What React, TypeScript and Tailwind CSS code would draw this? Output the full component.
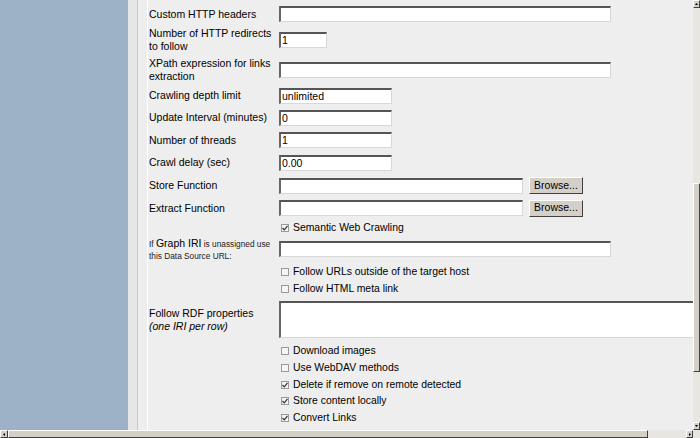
import React from "react";

const font = { fontFamily: '"Liberation Sans", Arial, sans-serif' };

function TextBox({ w, value = "", h = "h-[16px]" }: { w: string; value?: string; h?: string }) {
  return (
    <div
      className={`${w} ${h} bg-white border-t-2 border-l-2 border-b border-r border-t-[#555] border-l-[#666] border-b-[#d8d8d8] border-r-[#d8d8d8] pl-[1px] text-[10.5px] leading-[13px] text-black overflow-hidden`}
    >
      {value}
    </div>
  );
}

function Browse() {
  return (
    <div className="ml-[6px] w-[54px] h-[17px] bg-[#d4d0c8] border border-t-white border-l-white border-b-[#404040] border-r-[#404040] flex items-center justify-center text-[10.5px] text-black">
      Browse...
    </div>
  );
}

function Check({ checked, label }: { checked: boolean; label: string }) {
  return (
    <div className="flex items-center ml-[2px]">
      <span className="w-[8px] h-[8px] border border-[#9a9a9a] bg-[#f4f4f4] flex items-center justify-center">
        {checked && (
          <svg width="6" height="6" viewBox="0 0 6 6">
            <path d="M0.5 3 L2.3 4.8 L5.5 0.8" stroke="#333" strokeWidth="1.2" fill="none" />
          </svg>
        )}
      </span>
      <span className="ml-[4px] text-[10.4px] text-black">{label}</span>
    </div>
  );
}

function Row({ h, label, children }: { h: string; label?: React.ReactNode; children: React.ReactNode }) {
  return (
    <div className={`flex items-center ${h}`}>
      <div className="w-[130px] shrink-0 text-[10.5px] leading-[13px] text-black">{label}</div>
      <div className="flex items-center">{children}</div>
    </div>
  );
}

export default function App() {
  return (
    <div className="w-[700px] h-[438px] flex flex-col overflow-hidden bg-[#eeeeee]" style={font}>
      <div className="flex flex-1 min-h-0">
        {/* left nav panel */}
        <div className="w-[128px] bg-[#9db2c7]" />
        <div className="w-[9px] bg-[#e6e6e6]" />
        <div className="w-px bg-[#c8c8c8]" />
        <div className="w-[9px] bg-[#ededed]" />
        <div className="w-px bg-white" />

        {/* form */}
        <div className="flex-1 pl-[1px] pt-[2px] overflow-hidden">
          <Row h="h-[24px]" label="Custom HTTP headers">
            <TextBox w="w-[332px]" />
          </Row>
          <Row h="h-[27px]" label={<>Number of HTTP redirects<br />to follow</>}>
            <TextBox w="w-[48px]" value="1" />
          </Row>
          <Row h="h-[33px]" label={<>XPath expression for links<br />extraction</>}>
            <TextBox w="w-[332px]" />
          </Row>
          <Row h="h-[19px]" label="Crawling depth limit">
            <TextBox w="w-[113px]" value="unlimited" />
          </Row>
          <Row h="h-[25px]" label="Update Interval (minutes)">
            <TextBox w="w-[113px]" value="0" />
          </Row>
          <Row h="h-[20px]" label="Number of threads">
            <TextBox w="w-[113px]" value="1" />
          </Row>
          <Row h="h-[25px]" label="Crawl delay (sec)">
            <TextBox w="w-[113px]" value="0.00" />
          </Row>
          <Row h="h-[21px]" label="Store Function">
            <TextBox w="w-[244px]" />
            <Browse />
          </Row>
          <Row h="h-[24px]" label="Extract Function">
            <TextBox w="w-[244px]" />
            <Browse />
          </Row>
          <Row h="h-[16px]">
            <Check checked label="Semantic Web Crawling" />
          </Row>
          <Row
            h="h-[26px]"
            label={
              <div className="text-[8.3px] leading-[12px] text-[#222]">
                If <span className="text-[10.5px] text-black">Graph IRI</span> is unassigned use
                <br />
                this Data Source URL:
              </div>
            }
          >
            <TextBox w="w-[332px]" />
          </Row>
          <Row h="h-[20px]">
            <Check checked={false} label="Follow URLs outside of the target host" />
          </Row>
          <Row h="h-[14px]">
            <Check checked={false} label="Follow HTML meta link" />
          </Row>
          <Row
            h="h-[47px]"
            label={
              <>
                Follow RDF properties
                <br />
                <i>(one IRI per row)</i>
              </>
            }
          >
            <TextBox w="w-[430px]" h="h-[37px]" />
          </Row>
          <Row h="h-[16px]">
            <Check checked={false} label="Download images" />
          </Row>
          <Row h="h-[18px]">
            <Check checked={false} label="Use WebDAV methods" />
          </Row>
          <Row h="h-[15px]">
            <Check checked label="Delete if remove on remote detected" />
          </Row>
          <Row h="h-[18px]">
            <Check checked label="Store content locally" />
          </Row>
          <Row h="h-[16px]">
            <Check checked label="Convert Links" />
          </Row>
        </div>

        {/* vertical scrollbar */}
        <div className="w-[7px] bg-[#e8e6e1] flex flex-col">
          <div className="h-[8px] bg-[#d4d0c8] border border-[#404040] border-t-white border-l-white flex items-center justify-center">
            <svg width="3" height="2" viewBox="0 0 3 2"><path d="M1.5 0 L3 2 L0 2 Z" fill="#000" /></svg>
          </div>
          <div className="h-[175px]" />
          <div className="h-[189px] bg-[#d4d0c8] border-l border-t border-white border-r border-r-[#404040] border-b border-b-[#404040]" />
          <div className="flex-1" />
          <div className="h-[8px] bg-[#d4d0c8] border border-[#404040] border-t-white border-l-white flex items-center justify-center">
            <svg width="3" height="2" viewBox="0 0 3 2"><path d="M0 0 L3 0 L1.5 2 Z" fill="#000" /></svg>
          </div>
        </div>
      </div>

      {/* horizontal scrollbar */}
      <div className="h-[8px] flex bg-[#e8e6e1]">
        <div className="w-[8px] bg-[#d4d0c8] border border-[#404040] border-t-white border-l-white flex items-center justify-center">
          <svg width="2" height="3" viewBox="0 0 2 3"><path d="M0 1.5 L2 0 L2 3 Z" fill="#000" /></svg>
        </div>
        <div className="w-[640px] bg-[#d4d0c8] border-t border-l border-white border-r border-r-[#404040] border-b border-b-[#404040]" />
        <div className="flex-1" />
        <div className="w-[7px] bg-[#d4d0c8] border border-[#404040] border-t-white border-l-white flex items-center justify-center">
          <svg width="2" height="3" viewBox="0 0 2 3"><path d="M0 0 L2 1.5 L0 3 Z" fill="#000" /></svg>
        </div>
        <div className="w-[7px] bg-[#e8e6e1]" />
      </div>
    </div>
  );
}
